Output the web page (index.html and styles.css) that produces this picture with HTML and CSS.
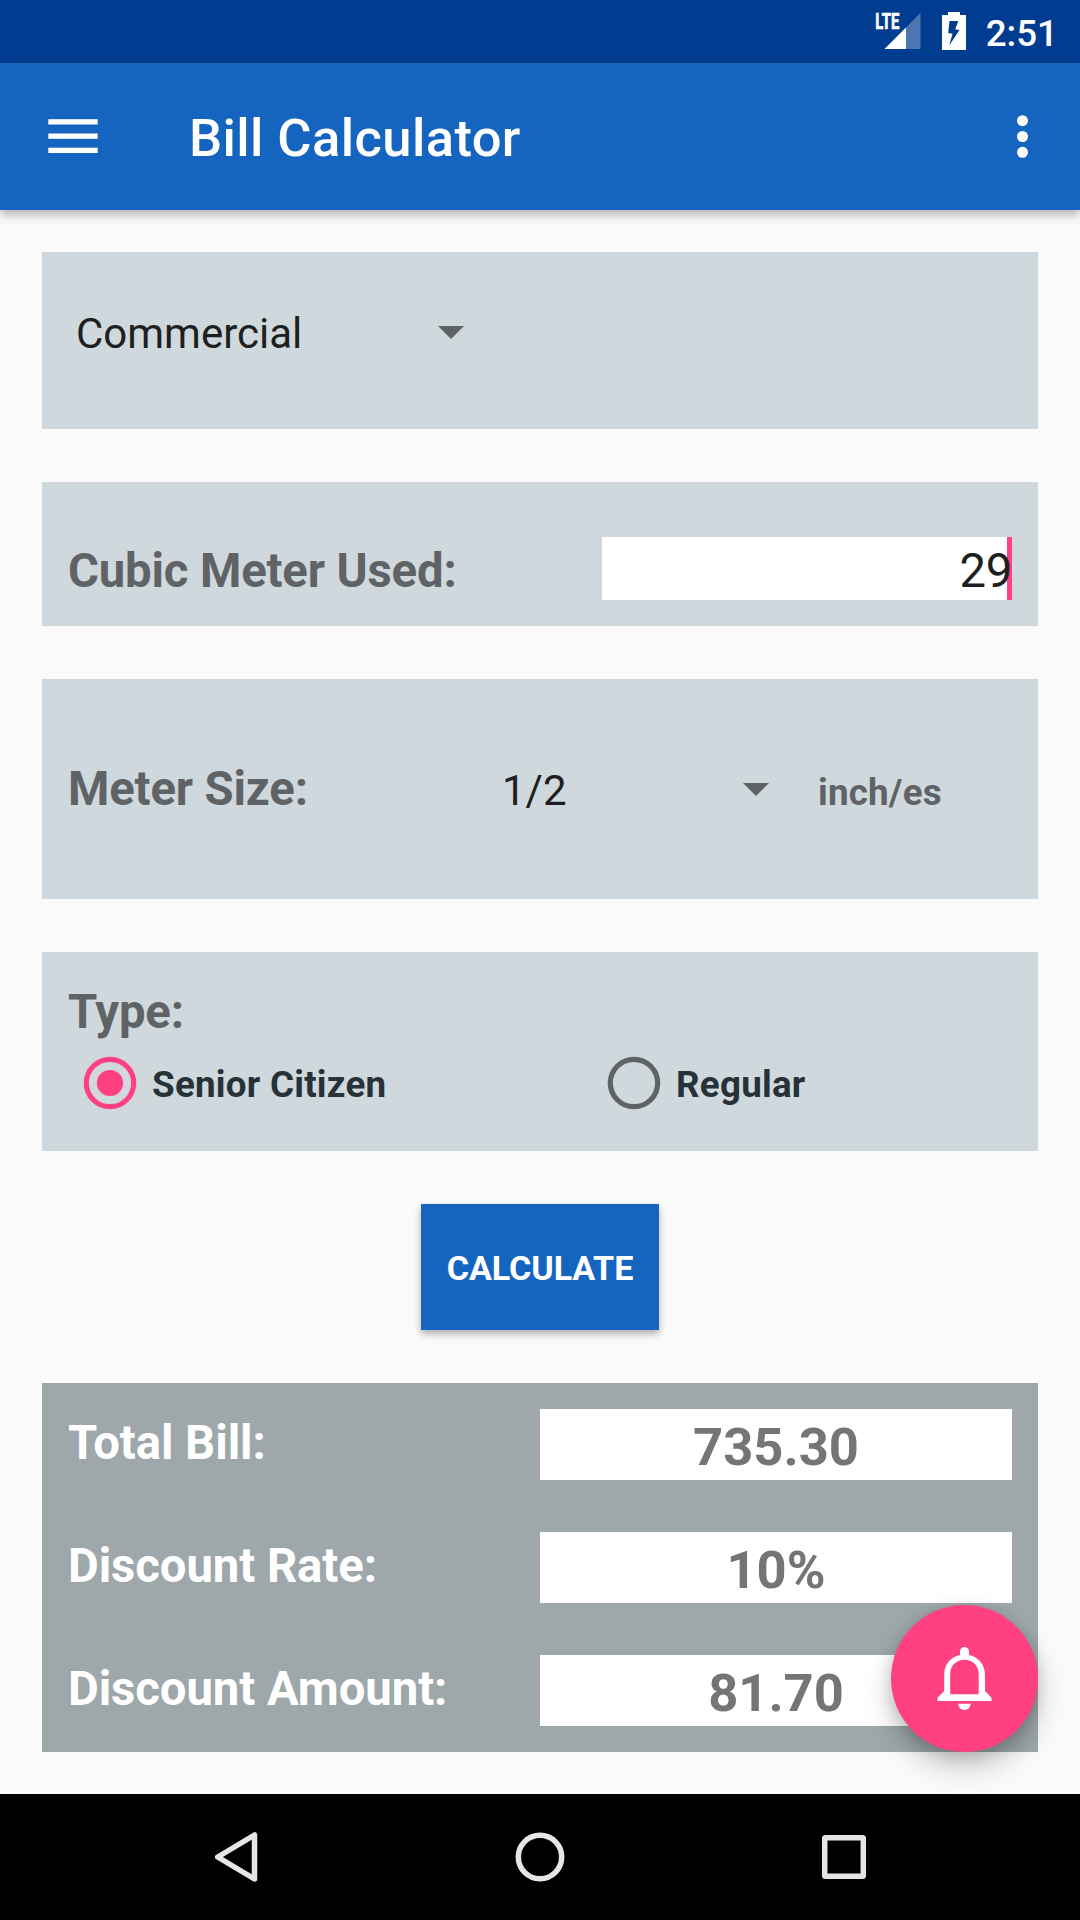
FILE: index.html
```html
<!DOCTYPE html>
<html lang="en">
<head>
<meta charset="utf-8">
<title>Bill Calculator</title>
<link rel="stylesheet" href="styles.css">
</head>
<body>
<div class="screen">
  <div class="status-bar">
    <svg class="signal" viewBox="-4 0 50 40" width="50" height="40">
      <path d="M45.500 1v36H9.500z" fill="#fff" opacity=".3"/>
      <path d="M31 15.500V37H9.500z" fill="#fff"/>
      <text class="lte" x="0.300" y="17" textLength="24" lengthAdjust="spacingAndGlyphs">LTE</text>
    </svg>
    <svg class="battery" viewBox="0 0 24 38" width="24" height="38">
      <path fill="#fff" fill-rule="evenodd" d="M6 0h12v3h6v35H0V3h6zM7.500 9 6.200 21l4.300.7L7.200 33.500 17.500 18l-4.300-.7L16.300 9z"/>
    </svg>
    <span class="time">2:51</span>
  </div>
  <header class="app-bar">
    <svg class="menu" viewBox="0 0 50 36" width="50" height="36" fill="#fff">
      <rect x=".3" y=".2" width="49.400" height="5.300"/>
      <rect x=".3" y="14.500" width="49.400" height="5.300"/>
      <rect x=".3" y="28.700" width="49.400" height="5.300"/>
    </svg>
    <h1 class="title">Bill Calculator</h1>
    <svg class="overflow" viewBox="0 0 12 44" width="12" height="44" fill="#fff">
      <circle cx="5.500" cy="5.700" r="5.500"/><circle cx="5.500" cy="21.500" r="5.500"/><circle cx="5.500" cy="37.300" r="5.500"/>
    </svg>
  </header>
  <main class="content">
    <section class="card category">
      <div class="spinner spinner-category">
        <span>Commercial</span>
        <svg class="caret" viewBox="0 0 26 13" width="26" height="13"><path d="M0 0h26L13 13z"/></svg>
      </div>
    </section>
    <section class="card usage">
      <span class="label">Cubic Meter Used:</span>
      <div class="input"><span class="input-text">29</span></div>
    </section>
    <section class="card size">
      <span class="label size-label">Meter Size:</span>
      <div class="spinner spinner-size">
        <span>1/2</span>
        <svg class="caret" viewBox="0 0 26 13" width="26" height="13"><path d="M0 0h26L13 13z"/></svg>
      </div>
      <span class="unit">inch/es</span>
    </section>
    <section class="card type">
      <span class="label">Type:</span>
      <div class="radios">
        <div class="radio">
          <svg viewBox="0 0 54 54" width="54" height="54"><circle cx="27" cy="27" r="23.700" fill="none" stroke="#ff4081" stroke-width="5.200"/><circle cx="27" cy="27" r="13.100" fill="#ff4081"/></svg>
          <span>Senior Citizen</span>
        </div>
        <div class="radio">
          <svg viewBox="0 0 54 54" width="54" height="54"><circle cx="27" cy="27" r="23.700" fill="none" stroke="#5f6365" stroke-width="5.200"/></svg>
          <span>Regular</span>
        </div>
      </div>
    </section>
    <div class="calculate">CALCULATE</div>
    <section class="results">
      <div class="row"><span class="result-label">Total Bill:</span><span class="value">735.30</span></div>
      <div class="row"><span class="result-label">Discount Rate:</span><span class="value">10%</span></div>
      <div class="row"><span class="result-label">Discount Amount:</span><span class="value">81.70</span></div>
    </section>
    <div class="fab">
      <svg viewBox="0.500 0 54 64" width="54" height="64" fill="#fff">
        <path fill-rule="evenodd" d="M22.500 8V4.500a4.500 4.500 0 0 1 9 0V8C41 10.300 47.500 17.500 47.500 27.500V44L54 50.700V54H0V50.700L6.700 44V27.500C6.700 17.500 13 10.300 22.500 8zM12.700 47.300H41.200V27C41.200 18.500 35 12.800 27 12.800S12.700 18.500 12.700 27z"/>
        <path d="M20.700 56.800H33.200A6.250 6.250 0 0 1 20.700 56.800z"/>
      </svg>
    </div>
  </main>
  <nav class="nav-bar">
    <svg viewBox="0 0 54 54" width="54" height="54"><path d="M45.500 5v44L8.700 27z"/></svg>
    <svg viewBox="0 0 54 54" width="54" height="54"><circle cx="27" cy="27" r="21.700"/></svg>
    <svg viewBox="0 0 54 54" width="54" height="54"><rect x="7.700" y="7.700" width="38.600" height="38.600" rx=".8"/></svg>
  </nav>
</div>
</body>
</html>
```
FILE: styles.css
```css
* { box-sizing: border-box; }

body {
  margin: 0;
  background: #fafafa;
  font-family: Roboto, sans-serif;
  color: #1e1f20;
}

.screen {
  width: 1080px;
  height: 1920px;
  display: flex;
  flex-direction: column;
  overflow: hidden;
}

svg { display: block; flex: none; overflow: visible; }

.status-bar {
  height: 63px;
  flex: none;
  display: flex;
  align-items: flex-start;
  justify-content: flex-end;
  padding: 12px 22px 0 0;
  background: #003c8f;
  color: #fff;
}

.lte {
  font: 700 22.500px Roboto, sans-serif;
  fill: #fff;
  stroke: #fff;
  stroke-width: .7px;
}

.battery { margin-left: 21px; }

.time {
  margin: 0 0 0 19.500px;
  font-size: 36.750px;
  font-weight: 500;
  line-height: 43px;
}

.app-bar {
  height: 147px;
  flex: none;
  display: flex;
  align-items: center;
  padding: 0 51.500px 0 48px;
  background: #1565c0;
  color: #fff;
  box-shadow: 0 4px 10px rgba(0, 0, 0, .32);
}

.title {
  flex: 1;
  margin: 2px 0 0 91px;
  font-size: 52.500px;
  font-weight: 500;
  line-height: 62px;
  letter-spacing: .4px;
}

.content {
  position: relative;
  flex: 1;
  display: flex;
  flex-direction: column;
  gap: 53px;
  padding: 42px;
}

.card {
  display: flex;
  flex: none;
  padding: 0 26px;
  background: #cfd8dc;
}

.category { height: 177px; }
.usage { height: 144px; justify-content: space-between; padding-top: 55px; }
.size { height: 220px; }
.type { height: 199px; flex-direction: column; padding-top: 32px; }

.label, .result-label {
  font-size: 47.250px;
  font-weight: 700;
  line-height: 56px;
}

.label { color: #5f6365; letter-spacing: -.15px; }
.usage .label { margin-top: 6px; }

.spinner {
  display: flex;
  justify-content: space-between;
  font-size: 42px;
  line-height: 50px;
}

.caret { fill: #5f6365; }
.spinner-category { width: 395.500px; margin-top: 57px; padding-left: 8px; }
.spinner-category .caret, .spinner-size .caret { margin-top: 17px; }

.input {
  width: 410px;
  height: 63px;
  background: #fff;
  border-right: 5px solid #ff4081;
  font-size: 47.250px;
  line-height: 69px;
  text-align: right;
}

.input-text { margin-right: -5px; letter-spacing: -.3px; }

.size-label { width: 434px; margin-top: 82px; }
.spinner-size { width: 266.500px; margin-top: 87px; }

.unit {
  margin: 92px 0 0 49.500px;
  font-size: 36.750px;
  font-weight: 700;
  line-height: 43px;
  letter-spacing: .2px;
  color: #5f6365;
}

.radios {
  display: grid;
  grid-template-columns: 524px 1fr;
  margin: 16px 0 0 15px;
}

.radio {
  display: flex;
  align-items: center;
  gap: 15px;
  font-size: 36.750px;
  font-weight: 700;
  line-height: 43px;
  letter-spacing: .25px;
  color: #263238;
}

.radio span { padding-top: 2px; }

.calculate {
  width: 238px;
  height: 126px;
  flex: none;
  align-self: center;
  background: #1565c0;
  color: #fff;
  font-size: 34.125px;
  font-weight: 700;
  line-height: 128px;
  letter-spacing: -.1px;
  text-align: center;
  box-shadow: 0 4px 7px rgba(0, 0, 0, .3);
}

.results {
  height: 369px;
  flex: none;
  display: flex;
  flex-direction: column;
  gap: 52px;
  padding: 26px;
  background: #9ea7aa;
}

.row { display: flex; height: 71px; }
.result-label { width: 472px; padding-top: 6px; color: #fff; letter-spacing: -.06px; }

.value {
  flex: 1;
  background: #fff;
  color: #757575;
  font-size: 52.500px;
  font-weight: 700;
  line-height: 76px;
  text-align: center;
}

.fab {
  position: absolute;
  right: 42px;
  bottom: 42px;
  width: 147px;
  height: 147px;
  display: flex;
  align-items: center;
  justify-content: center;
  border-radius: 50%;
  background: #ff4081;
  box-shadow: 0 14px 28px rgba(0, 0, 0, .24), 0 3px 14px rgba(0, 0, 0, .12);
}

.nav-bar {
  position: relative;
  height: 126px;
  flex: none;
  display: flex;
  align-items: center;
  justify-content: center;
  gap: 250px;
  background: #000;
}

.nav-bar svg {
  fill: none;
  stroke: #e6e6e6;
  stroke-width: 5.500px;
  stroke-linejoin: round;
}
```
